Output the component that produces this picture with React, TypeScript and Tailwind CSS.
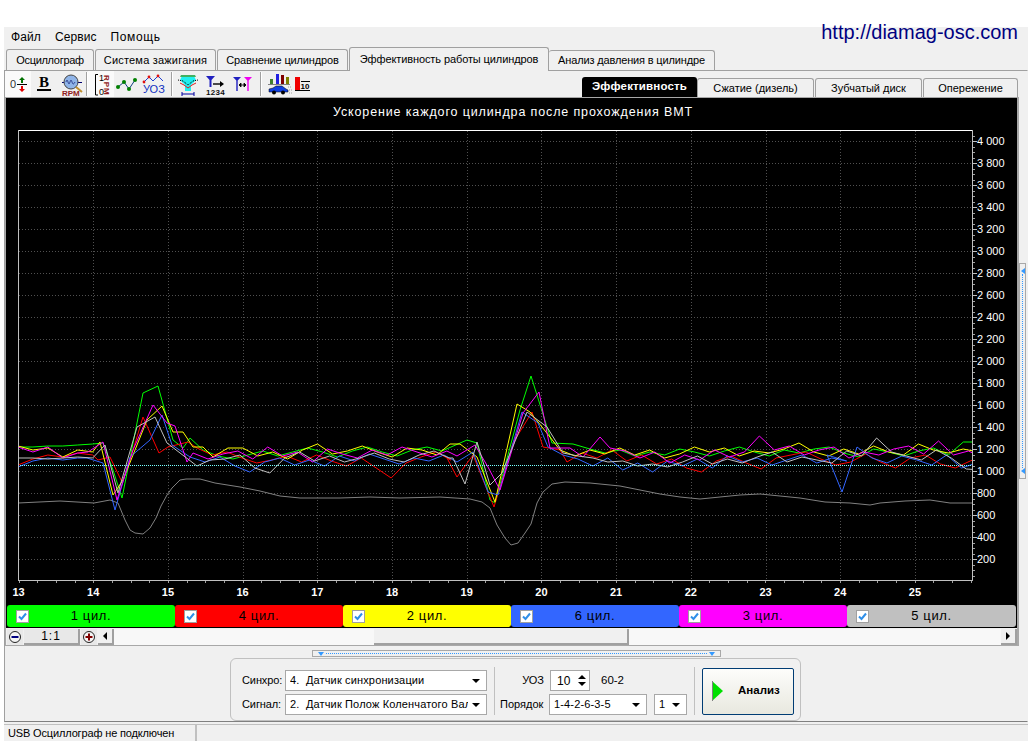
import type { ReactNode } from "react";

const seg = (x0: number, ys: number[]) => ys.map((y, i) => [x0 + i * 14.93, y]);

// plot data in page pixels, the two spikes are read point by point
const SERIES: { color: string; pts: number[][] }[] = [
  {
    color: "#00ff00",
    pts: [
      ...seg(18, [447, 447, 446, 446, 445, 444]),
      [103, 443], [113, 470], [122, 498], [143, 393], [158, 386], [173, 440], [183, 448], [190, 438], [203, 450],
      ...seg(218, [456, 459, 455, 451, 456, 452, 448, 452, 457, 451, 447, 452, 456, 450, 447, 451]),
      [467, 440], [477, 443], [490, 500], [495, 503], [520, 410], [531, 376], [552, 443], [573, 444], [590, 449],
      ...seg(605, [453, 450, 456, 452, 455, 449, 452, 456, 451, 447, 452, 456, 450, 453, 449, 447, 453, 457, 449, 452, 456, 451, 448, 455, 442, 442, 451]),
    ],
  },
  {
    color: "#ff0000",
    pts: [
      ...seg(18, [465, 459, 455, 457, 453, 455]),
      [98, 460], [110, 457], [122, 482], [130, 460], [143, 417], [159, 453], [168, 447], [188, 442], [197, 448],
      ...seg(212, [455, 452, 458, 463, 460, 456, 462, 455, 461, 466, 458, 468, 478, 463, 457, 452, 460]),
      [447, 458], [457, 477], [473, 455], [494, 507], [513, 443], [532, 412], [543, 447], [560, 450], [567, 462],
      ...seg(582, [453, 458, 450, 461, 455, 464, 459, 468, 472, 461, 456, 463, 469, 458, 455, 452, 459, 465, 462, 454, 462, 468, 458, 455, 464, 468, 461, 455]),
    ],
  },
  {
    color: "#ffff00",
    pts: [
      ...seg(18, [446, 450, 448, 457, 450, 452]),
      [100, 442], [113, 495], [123, 480], [147, 420], [162, 406], [173, 432], [183, 432], [193, 447], [203, 447],
      ...seg(213, [457, 448, 448, 456, 452, 459, 450, 444, 454, 451, 446, 452, 457, 448, 450, 455]),
      [450, 444], [460, 444], [477, 457], [495, 502], [517, 404], [530, 412], [550, 437], [560, 450],
      ...seg(575, [456, 450, 454, 448, 455, 450, 458, 454, 447, 452, 448, 456, 451, 453, 449, 443, 452, 456, 449, 454, 446, 452, 455, 444, 450, 453, 449, 452]),
    ],
  },
  {
    color: "#3366ff",
    pts: [
      ...seg(18, [467, 461, 458, 460, 458]),
      [87, 458], [103, 463], [115, 510], [130, 457], [150, 440], [162, 415], [172, 445], [190, 457],
      ...seg(205, [462, 457, 466, 472, 462, 458, 465, 460, 466, 456, 461, 454, 459, 464, 458, 461, 455]),
      [457, 462], [473, 452], [488, 492], [498, 495], [522, 412], [538, 423], [548, 447],
      ...seg(563, [455, 459, 466, 458, 470, 463, 472, 461, 466, 459, 468, 456, 462, 458, 465, 460, 455, 463, 458, 461]),
      [827, 455], [842, 492], [857, 447],
      ...seg(872, [458, 463, 456, 460, 465, 455, 468, 463]),
    ],
  },
  {
    color: "#ff00ff",
    pts: [
      ...seg(18, [447, 452, 447, 458, 453]),
      [88, 452], [103, 442], [117, 500], [133, 450], [153, 405], [167, 423], [175, 426], [187, 462], [193, 453],
      ...seg(208, [459, 454, 451, 459, 447, 456, 452, 462, 449, 454, 458, 450, 455, 447, 452, 457, 451]),
      [457, 456], [475, 445], [488, 467], [500, 490], [523, 413], [539, 392], [550, 448], [570, 448], [583, 457], [600, 437], [610, 448],
      ...seg(625, [451, 458, 452, 463, 455, 460, 450, 457, 452, 436, 450, 446, 455, 450, 447, 458, 452, 455, 449, 446, 454, 441, 455, 451, 458, 462, 452, 449]),
    ],
  },
  {
    color: "#c0c0c0",
    pts: [
      ...seg(18, [458, 458, 459, 458, 457, 458]),
      [105, 445], [118, 493], [137, 427], [155, 417], [167, 443], [197, 466], [210, 460],
      ...seg(225, [459, 455, 468, 473, 458, 452, 461, 456, 462, 458, 453, 459, 462, 455, 451, 458]),
      [453, 458], [465, 484], [477, 442], [490, 485], [502, 473], [527, 412], [547, 427], [563, 453],
      ...seg(578, [456, 458, 462, 461, 466, 464, 467, 462, 456, 464, 459, 463, 457, 452, 462, 457, 460, 463, 451, 456, 438, 452, 456, 460, 450, 458, 469, 470, 466, 455]),
    ],
  },
];

const CRANK = "18,503 60,501 94,503 110,500 118,503 125,520 130,530 135,533 143,534 150,528 156,518 161,506 167,495 172,488 180,480 186,479 200,479 215,483 240,487 260,491 280,496 300,498 340,498 370,497 400,498 440,497 470,499 482,502 490,508 497,525 505,538 511,545 518,543 525,533 531,524 537,503 543,492 552,484 565,482 590,483 620,486 640,490 660,494 680,497 700,499 720,497 740,495 760,494 780,496 800,498 825,502 850,503 870,505 880,503 905,501 930,500 950,503 972,503";

const Y_LABELS = [4000, 3800, 3600, 3400, 3200, 3000, 2800, 2600, 2400, 2200, 2000, 1800, 1600, 1400, 1200, 1000, 800, 600, 400, 200];
const X_LABELS = [13, 14, 15, 16, 17, 18, 19, 20, 21, 22, 23, 24, 25];
const yOf = (v: number) => 581 - (v / 200) * 22;
const xOf = (v: number) => 18.5 + (v - 13) * 74.7;

const CYLINDERS = [
  { label: "1 цил.", bg: "bg-[#00ff00]" },
  { label: "4 цил.", bg: "bg-[#ff0000]" },
  { label: "2 цил.", bg: "bg-[#ffff00]" },
  { label: "6 цил.", bg: "bg-[#3366ff]" },
  { label: "3 цил.", bg: "bg-[#ff00ff]" },
  { label: "5 цил.", bg: "bg-[#c0c0c0]" },
];

function Chart() {
  const minorX: number[] = [];
  for (let x = 18.5; x < 972; x += 18.67) minorX.push(Math.round(x) + 0.5);
  const minorY: number[] = [];
  for (let y = 135.5; y < 580; y += 5.5) minorY.push(Math.round(y) + 0.5);
  return (
    <svg width={1011} height={482} viewBox="6 122 1011 482" className="block" style={{ fontFamily: "'Liberation Sans', sans-serif" }}>
      <defs>
        <clipPath id="plot">
          <rect x={18} y={130} width={954} height={450} />
        </clipPath>
      </defs>
      <g stroke="#505050" strokeDasharray="1 2" shapeRendering="crispEdges">
        {Y_LABELS.map((v) => (
          <line key={v} x1={19} x2={972} y1={yOf(v) + 0.5} y2={yOf(v) + 0.5} />
        ))}
        {X_LABELS.slice(1).map((v) => (
          <line key={v} x1={Math.round(xOf(v)) + 0.5} x2={Math.round(xOf(v)) + 0.5} y1={131} y2={580} />
        ))}
      </g>
      <g clipPath="url(#plot)" fill="none">
        <polyline points={CRANK} stroke="#808080" strokeWidth={1} />
        {SERIES.map((s) => (
          <polyline key={s.color} points={s.pts.map((p) => p.join(",")).join(" ")} stroke={s.color} strokeWidth={1} />
        ))}
        <line x1={18} x2={972} y1={465.5} y2={465.5} stroke="#7ff" strokeDasharray="1 1" />
      </g>
      <g shapeRendering="crispEdges">
        <line x1={18} x2={973} y1={130.5} y2={130.5} stroke="#ffffff" />
        <line x1={18.5} x2={18.5} y1={130} y2={581} stroke="#c0c0c0" />
        <line x1={972.5} x2={972.5} y1={130} y2={581} stroke="#c0c0c0" />
        <line x1={18} x2={973} y1={580.5} y2={580.5} stroke="#c0c0c0" />
        {minorY.map((y) => (
          <line key={y} x1={973} x2={975} y1={y} y2={y} stroke="#a0a0a0" />
        ))}
        {minorX.map((x) => (
          <line key={x} x1={x} x2={x} y1={581} y2={583} stroke="#a0a0a0" />
        ))}
        {Y_LABELS.map((v) => (
          <line key={v} x1={973} x2={977} y1={yOf(v) + 0.5} y2={yOf(v) + 0.5} stroke="#c0c0c0" />
        ))}
      </g>
      <g fill="#ffffff" fontSize={11}>
        {Y_LABELS.map((v) => (
          <text key={v} x={977} y={yOf(v) + 3.5}>
            {v >= 1000 ? `${Math.floor(v / 1000)} ${String(v % 1000).padStart(3, "0")}` : v}
          </text>
        ))}
      </g>
      <g fill="#ffffff" fontSize={11} fontWeight="bold" textAnchor="middle">
        {X_LABELS.map((v) => (
          <text key={v} x={xOf(v)} y={596}>
            {v}
          </text>
        ))}
      </g>
    </svg>
  );
}

function ToolBtn({ children, active, w = 26 }: { children: ReactNode; active?: boolean; w?: number }) {
  return (
    <div className={active ? "h-[26px] bg-[#fafafa]" : "h-[26px]"} style={{ width: w }}>
      <svg width={w} height={26} viewBox={`0 0 ${w} 26`} className="block" style={{ fontFamily: "'Liberation Sans', sans-serif" }}>
        {children}
      </svg>
    </div>
  );
}

function ToolSep() {
  return <div className="h-[24px] w-[2px] border-l border-[#a0a0a0] bg-white" />;
}

function Toolbar() {
  return (
    <div className="flex h-[26px] items-center">
      <ToolBtn active>
        <text x={5} y={17} fontSize={11} fill="#333">0</text>
        <line x1={12} x2={22} y1={13.5} y2={13.5} stroke="#000" />
        <path d="M17 6l3 3h-2v3h-2V9h-2z" fill="#007000" />
        <path d="M17 21l3-3h-2v-3h-2v3h-2z" fill="#e00000" />
      </ToolBtn>
      <ToolBtn>
        <text x={8} y={16} fontSize={15} fontWeight="bold" fill="#000" style={{ fontFamily: "'Liberation Serif', serif" }}>B</text>
        <rect x={6} y={18} width={14} height={2} fill="#000" />
      </ToolBtn>
      <ToolBtn>
        <line x1={5} x2={25} y1={11.5} y2={11.5} stroke="#000070" />
        <circle cx={14} cy={11} r={7} fill="#8fb4e8" stroke="#444" />
        <path d="M9 11q1-4 2 0t2 0 2 0 3 0" fill="none" stroke="#203080" strokeWidth={0.8} />
        <line x1={19} x2={25} y1={16} y2={21} stroke="#c09030" strokeWidth={2} />
        <text x={5} y={25} fontSize={8} fontWeight="bold" fill="#902020">RPM</text>
      </ToolBtn>
      <div className="ml-[3px]"><ToolSep /></div>
      <ToolBtn active>
        <path d="M10 3.5H7.5V24H10" fill="none" stroke="#000" />
        <text x={11} y={10} fontSize={9} fill="#000">1</text>
        <text x={11} y={24} fontSize={9} fill="#000">0</text>
        <text transform="translate(16 4) rotate(90)" fontSize={8} fontWeight="bold" fill="#902020" letterSpacing={1}>RPM</text>
      </ToolBtn>
      <ToolBtn>
        <polyline points="4,16 10,11 15,18 21,9" fill="none" stroke="#104080" />
        <g fill="#008000">
          <circle cx={4} cy={16} r={2} />
          <circle cx={10} cy={11} r={2} />
          <circle cx={15} cy={18} r={2} />
          <circle cx={21} cy={9} r={2} />
        </g>
      </ToolBtn>
      <ToolBtn>
        <polyline points="4,11 9,6 13,10 18,5 23,10" fill="none" stroke="#2040d0" />
        <g fill="#e01010">
          <circle cx={4} cy={11} r={1.4} />
          <circle cx={9} cy={6} r={1.4} />
          <circle cx={18} cy={5} r={1.4} />
        </g>
        <text x={3} y={22} fontSize={11} fill="#1030c0">УОЗ</text>
      </ToolBtn>
      <div className="ml-[5px]"><ToolSep /></div>
      <div className="ml-[2px]" />
      <ToolBtn>
        <path d="M7 5h12l2 4-5 5v6h-6v-6L5 9z" fill="#20f0f0" />
        <path d="M6 4h14l1 2H5z" fill="#40b060" />
        <path d="M3 9l5 1 5 4 5-4 5-1" fill="none" stroke="#000" strokeDasharray="1 1" />
        <path d="M5 12l4 2 4 3 4-3 4-2" fill="none" stroke="#e02020" />
        <path d="M7 23h12M7 21v4M19 21v4" stroke="#0000a0" fill="none" />
      </ToolBtn>
      <ToolBtn>
        <path d="M5 5h9l-3.5 4v7h-2V9z" fill="#2020c0" />
        <path d="M12 13h8" stroke="#000" strokeWidth={1.4} />
        <path d="M19 10l4 3-4 3z" fill="#000" />
        <text x={5} y={24} fontSize={8} fontWeight="bold" fill="#111" letterSpacing={0.3}>1234</text>
      </ToolBtn>
      <ToolBtn>
        <path d="M6 6h8l-3.3 3.5V20H9.3V9.5z" fill="#2020c0" />
        <path d="M17 6h8l-3.3 3.5V20h-1.4V9.5z" fill="#f000f0" />
        <path d="M12 14h7M12 14l2-2v4zM19 14l-2-2v4z" stroke="#000" fill="#000" strokeWidth={0.8} />
      </ToolBtn>
      <div className="ml-[7px]"><ToolSep /></div>
      <div className="ml-[3px]" />
      <ToolBtn w={27}>
        <rect x={5} y={8} width={3} height={5} fill="#408030" />
        <rect x={11} y={3} width={3} height={10} fill="#2020e0" />
        <rect x={16} y={4} width={3} height={9} fill="#800000" />
        <rect x={21} y={6} width={3} height={7} fill="#808000" />
        <rect x={3} y={13} width={22} height={1} fill="#808080" />
        <path d="M4 21v-3l4-1 3-2h6l4 3 2 1v2z" fill="#1040e0" stroke="#000" strokeWidth={0.5} />
        <circle cx={9} cy={21.5} r={2} fill="#000" />
        <circle cx={18} cy={21.5} r={2} fill="#000" />
        <path d="M23 16h3M24 19h3M24 22h3" stroke="#a0a0a0" strokeDasharray="1 1" />
      </ToolBtn>
      <ToolBtn>
        <rect x={3} y={6} width={5} height={13} fill="#f00000" />
        <rect x={3} y={19} width={15} height={1} fill="#000" />
        <line x1={9} x2={18} y1={10.5} y2={10.5} stroke="#000" />
        <text x={8.5} y={18} fontSize={8} fontWeight="bold" fill="#000">10</text>
      </ToolBtn>
    </div>
  );
}

function Combo({ text, className }: { text: string; className: string }) {
  return (
    <div className={`flex h-[21px] items-center border border-[#a8a8a8] bg-white pl-[4px] pr-[6px] ${className}`}>
      <span className="min-w-0 flex-1 overflow-hidden whitespace-pre text-[11px] leading-none tracking-[0.15px]">{text}</span>
      <span className="ml-1 h-0 w-0 border-x-[4px] border-t-[4px] border-x-transparent border-t-black" />
    </div>
  );
}

function Check() {
  return (
    <span className="flex h-[13px] w-[13px] items-center justify-center border border-[#a0a0a0] bg-white">
      <svg width={9} height={9} viewBox="0 0 9 9">
        <path d="M1 4.5L3.5 7 8 1.5" fill="none" stroke="#2f8fe8" strokeWidth={2} />
      </svg>
    </span>
  );
}

function CircleBtn({ plus }: { plus?: boolean }) {
  return (
    <div className="flex h-[16px] w-[16px] items-center justify-center bg-[#e8e8e8]">
      <svg width={14} height={14} viewBox="0 0 14 14">
        <circle cx={7} cy={7} r={5.5} fill="#f4f4f4" stroke="#222" />
        {plus ? <path d="M7 3.5v7M3.5 7h7" stroke="#800000" strokeWidth={2} /> : <path d="M3.5 7h7" stroke="#000080" strokeWidth={2} />}
      </svg>
    </div>
  );
}

function ScrollBtn({ right }: { right?: boolean }) {
  return (
    <div className="flex h-[16px] w-[16px] items-center justify-center border-b-2 border-r-2 border-[#a0a0a0] bg-[#f0f0f0]">
      <span className={right ? "h-0 w-0 border-y-[4px] border-l-[4px] border-y-transparent border-l-black" : "h-0 w-0 border-y-[4px] border-r-[4px] border-y-transparent border-r-black"} />
    </div>
  );
}

function SplitArrow({ dir }: { dir: "down" | "left" }) {
  return dir === "down" ? (
    <span className="h-0 w-0 border-x-[3px] border-t-[4px] border-x-transparent border-t-[#3399ff]" />
  ) : (
    <span className="h-0 w-0 border-y-[3px] border-r-[4px] border-y-transparent border-r-[#3399ff]" />
  );
}

const SUB_TABS = ["Сжатие (дизель)", "Зубчатый диск", "Опережение"];
const TABS = [
  { label: "Осциллограф", cls: "w-[88px] tracking-[-0.3px]" },
  { label: "Система зажигания", cls: "w-[121px] tracking-[0.2px]" },
  { label: "Сравнение цилиндров", cls: "w-[131px] tracking-[-0.15px]" },
];

export default function App() {
  return (
    <div
      className="flex h-[746px] w-[1032px] flex-col overflow-hidden bg-white pb-[5px] pl-[4px] pr-[4px] pt-[27px] text-black"
      style={{ fontFamily: "'Liberation Sans', sans-serif" }}
    >
      <div className="flex flex-1 flex-col bg-[#f0f0f0]">
        {/* menu */}
        <div className="flex h-[20px] items-center gap-[14px] pl-[7px] text-[12px] tracking-[0.1px]">
          <span>Файл</span>
          <span>Сервис</span>
          <span className="tracking-[0.6px]">Помощь</span>
          <span className="-mt-[10px] ml-auto mr-[10px] text-[20px] leading-none tracking-normal text-[#000080]">http://diamag-osc.com</span>
        </div>

        {/* main tabs */}
        <div className="flex h-[23px] items-end pl-[2px] text-[11px]">
          {TABS.map((t) => (
            <div key={t.label} className={`mr-[1px] flex h-[21px] items-center justify-center rounded-t-[3px] border border-b-0 border-[#a0a0a0] bg-[#f0f0f0] ${t.cls}`}>
              {t.label}
            </div>
          ))}
          <div className="relative z-10 -mb-px flex h-[24px] w-[200px] items-center justify-center rounded-t-[3px] border border-b-0 border-[#a0a0a0] bg-[#f0f0f0] tracking-[-0.1px]">
            Эффективность работы цилиндров
          </div>
          <div className="flex h-[20px] w-[166px] items-center justify-center rounded-t-[3px] border border-b-0 border-l-0 border-[#a0a0a0] tracking-[-0.15px]">
            Анализ давления в цилиндре
          </div>
        </div>

        <div className="flex flex-1 flex-col border-b border-l border-r border-t border-b-[#808080] border-l-[#a0a0a0] border-r-[#f0f0f0] border-t-[#a0a0a0]">
          {/* toolbar + sub tabs */}
          <div className="flex h-[26px] items-end">
            <Toolbar />
            <div className="ml-auto mr-[9px] flex items-end text-[11px]">
              <div className="flex h-[20px] w-[115px] items-center justify-center rounded-t-[3px] bg-black text-[11.5px] font-bold tracking-[0.15px] text-white">Эффективность</div>
              {SUB_TABS.map((t, i) => (
                <div
                  key={t}
                  className={`flex h-[19px] items-center justify-center rounded-t-[3px] border border-b-0 border-[#a0a0a0] ${
                    i === 0 ? "mr-[1px] w-[117px]" : i === 1 ? "mr-[1px] w-[107px]" : "w-[95px]"
                  }`}
                >
                  {t}
                </div>
              ))}
            </div>
          </div>

          <div className="flex h-[549px]">
            <div className="w-[1014px] border border-b-[1px] border-r-2 border-[#a8a8a8]">
              <div className="bg-black">
                <div className="flex h-[24px] items-center justify-center pt-[4px] text-[12.5px] tracking-[0.87px] text-white">
                  <span className="pl-[3px]">Ускорение каждого цилиндра после прохождения ВМТ</span>
                </div>
                <Chart />
                <div className="flex h-[24px] pl-[1px] pt-[1px]">
                  {CYLINDERS.map((c) => (
                    <div key={c.label} className={`relative flex h-[22px] w-[168px] items-center justify-center rounded-[3px] text-[13px] tracking-[0.6px] last:w-[169px] ${c.bg}`}>
                      <span className="absolute left-[9px]">
                        <Check />
                      </span>
                      {c.label}
                    </div>
                  ))}
                </div>
              </div>
              <div className="flex h-[17px] items-start pl-[1px] pt-[1px]">
                <CircleBtn />
                <div className="mx-[1px] flex h-[16px] w-[56px] items-center justify-center border-b-2 border-r-2 border-[#a0a0a0] bg-[#e8e8e8] text-[12px] tracking-[1px]">1:1</div>
                <CircleBtn plus />
                <div className="ml-[1px]">
                  <ScrollBtn />
                </div>
                <div className="flex h-[16px] flex-1 bg-[#f8f8f8] pl-[260px] pr-[372px]">
                  <div className="flex-1 border-b-2 border-r-2 border-[#a0a0a0] bg-[#f0f0f0]" />
                </div>
                <ScrollBtn right />
              </div>
            </div>
            {/* vertical splitter */}
            <div className="flex flex-1 items-start pt-[166px]">
              <div className="flex h-[216px] w-[7px] flex-col items-center justify-between border border-[#a8a8a8] py-[4px]">
                <SplitArrow dir="left" />
                <div className="flex-1 border-l border-dotted border-[#3399ff]" />
                <SplitArrow dir="left" />
              </div>
            </div>
          </div>

          {/* horizontal splitter */}
          <div className="ml-[307px] mt-[4px] flex h-[7px] w-[409px] items-center justify-between border border-[#a8a8a8] px-[5px]">
            <SplitArrow dir="down" />
            <div className="mx-[2px] flex-1 border-t border-dotted border-[#3399ff]" />
            <SplitArrow dir="down" />
          </div>

          {/* analysis group */}
          <div className="ml-[225px] mt-[1px] flex h-[63px] w-[571px] items-center rounded-[6px] border border-[#c0c0c0] pl-[11px] text-[12px]">
            <div className="flex w-[245px] flex-col gap-[3px] pt-[6px]">
              <div className="flex items-center">
                <span className="w-[43px] text-[11px] tracking-[-0.1px]">Синхро:</span>
                <Combo text="4.  Датчик синхронизации" className="w-[202px]" />
              </div>
              <div className="flex items-center">
                <span className="w-[43px] text-[11px] tracking-[-0.1px]">Сигнал:</span>
                <Combo text="2.  Датчик Полож Коленчатого Вала" className="w-[202px]" />
              </div>
            </div>
            <div className="ml-[7px] mr-[5px] mt-[3px] h-[48px] w-px bg-[#c0c0c0]" />
            <div className="flex w-[194px] flex-col gap-[3px] pt-[6px]">
              <div className="flex items-center">
                <span className="w-[50px] pr-[6px] text-right text-[11px]">УОЗ</span>
                <div className="flex h-[21px] w-[40px] items-center justify-between border border-[#a8a8a8] bg-white pl-[6px] pr-[3px]">
                  <span>10</span>
                  <span className="flex flex-col gap-[3px]">
                    <span className="block h-0 w-0 border-x-[4px] border-b-[4px] border-x-transparent border-b-black" />
                    <span className="block h-0 w-0 border-x-[4px] border-t-[4px] border-x-transparent border-t-black" />
                  </span>
                </div>
                <span className="ml-[11px] text-[11.5px]">60-2</span>
              </div>
              <div className="flex items-center">
                <span className="w-[49px] pr-[6px] text-right text-[11px]">Порядок</span>
                <Combo text="1-4-2-6-3-5" className="w-[98px]" />
                <Combo text="1" className="ml-[7px] w-[33px]" />
              </div>
            </div>
            <div className="mr-[7px] mt-[3px] h-[48px] w-px bg-[#c0c0c0]" />
            <button className="mt-[3px] flex h-[47px] w-[92px] items-center rounded-[2px] border border-[#003c74] bg-gradient-to-b from-[#fdfdfb] to-[#e8e8df] pl-[9px]">
              <svg width={11} height={20} viewBox="0 0 11 20">
                <path d="M0 0L11 10 0 20z" fill="#00e000" />
                <path d="M0.5 0v20" stroke="#808080" />
              </svg>
              <span className="ml-[15px] text-[11.5px] font-bold">Анализ</span>
            </button>
          </div>
        </div>

        {/* status bar */}
        <div className="mt-[2px] flex h-[17px] border-t border-[#c0c0c0]">
          <div className="flex w-[188px] items-center pl-[4px] text-[11px] tracking-[-0.15px]">USB Осциллограф не подключен</div>
          <div className="ml-[3px] border-l-2 border-[#c0c0c0]" />
        </div>
      </div>
    </div>
  );
}
